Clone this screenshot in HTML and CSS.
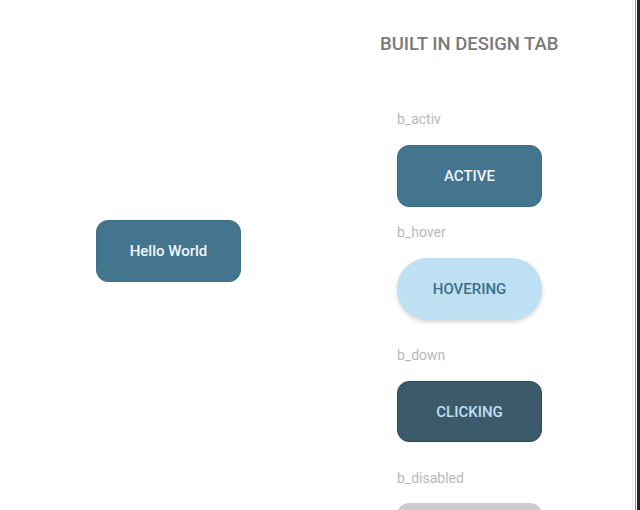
FILE: index.html
```html
<!DOCTYPE html>
<html>
<head>
<meta charset="utf-8">
<link rel="stylesheet" href="styles.css">
</head>
<body>
<div class="app">
  <div class="stage">
    <div class="btn btn-active hello">Hello World</div>
  </div>
  <div class="panel">
    <div class="title">BUILT IN DESIGN TAB</div>
    <div class="states">
      <div class="label l-activ">b_activ</div>
      <div class="btn btn-active upper">ACTIVE</div>
      <div class="label l-hover">b_hover</div>
      <div class="btn btn-hover upper">HOVERING</div>
      <div class="label l-down">b_down</div>
      <div class="btn btn-down upper">CLICKING</div>
      <div class="label l-disabled">b_disabled</div>
      <div class="btn btn-disabled upper"></div>
    </div>
  </div>
  <div class="edge"></div>
</div>
</body>
</html>
```
FILE: styles.css
```css
html, body {
  margin: 0;
  padding: 0;
  background: #ffffff;
  overflow: hidden;
}
body {
  font-family: Roboto, "Liberation Sans", sans-serif;
}
.app {
  display: flex;
  width: 640px;
  height: 510px;
  overflow: hidden;
}
.stage {
  width: 380px;
  flex: none;
  padding: 220px 0 0 96px;
  box-sizing: border-box;
}
.panel {
  flex: 1;
  padding-top: 34px;
}
.title {
  font-size: 18.5px;
  line-height: 21px;
  font-weight: 500;
  color: #7a7a7a;
}
.states {
  padding-left: 17px;
  display: flex;
  flex-direction: column;
  align-items: flex-start;
}
.label {
  font-size: 14px;
  line-height: 16px;
  color: #b9b9b9;
}
.l-activ { margin-top: 56px; margin-bottom: 18px; }
.l-hover { margin-top: 17px; margin-bottom: 18px; }
.l-down { margin-top: 27px; margin-bottom: 18px; }
.l-disabled { margin-top: 28px; margin-bottom: 17px; }
.btn {
  width: 145px;
  height: 62px;
  box-sizing: border-box;
  display: flex;
  align-items: center;
  justify-content: center;
  font-size: 15px;
  font-weight: 500;
  border-radius: 12px;
  flex: none;
}
.upper { text-transform: uppercase; }
.btn-active {
  background: #44758f;
  color: #eef4f8;
  border: 1px solid #3f6f88;
}
.hello { color: #f2f7fa; }
.btn-hover {
  background: #bde0f3;
  color: #3f6e88;
  border-radius: 31px;
  height: 62px;
  box-shadow: 0 2px 4px rgba(0,0,0,0.18);
}
.btn-down {
  background: #3b5a6a;
  color: #bde0f3;
  border: 1px solid #2e4a58;
  height: 61px;
}
.btn-disabled {
  background: #cccccc;
}
.edge {
  width: 8px;
  flex: none;
  background: linear-gradient(to right,
    #ececec 0, #ececec 1px,
    #ffffff 1px, #ffffff 3px,
    #8a8a8a 3px, #8a8a8a 4px,
    #ffffff 4px, #ffffff 5px,
    #222222 5px, #222222 8px);
}
```
